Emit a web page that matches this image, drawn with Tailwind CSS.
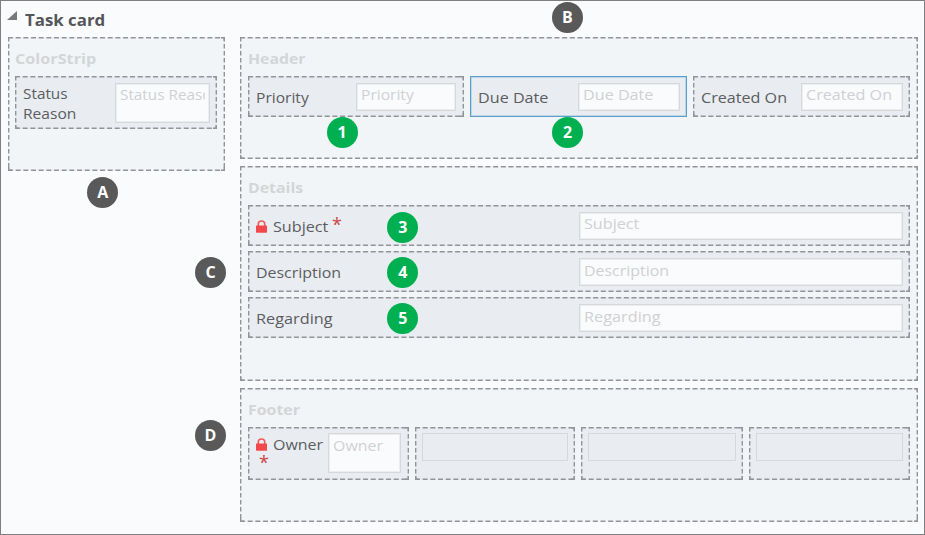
<!DOCTYPE html>
<html lang="en">
<head>
<meta charset="utf-8">
<title>Task card</title>
<script src="https://cdn.jsdelivr.net/npm/@tailwindcss/browser@4"></script>
</head>
<body class="bg-[#fafbfd]">
<main class="relative w-[925px] h-[535px] overflow-hidden border border-[#7f7f7f] bg-[#fafbfd] font-['Open_Sans','Noto_Sans',sans-serif] text-[15px] leading-5 text-[#5b5d60]">
  <header class="flex h-9 pl-[6px]">
    <svg class="mt-[10px] w-[10px] h-[9px]" viewBox="0 0 10 9"><path d="M10 0V9H0Z" fill="#77787a"/></svg>
    <h1 class="ml-[8px] mt-[9px] text-[16px] font-bold text-[#55565a]"><span data-w="80">Task card</span></h1>
  </header>

  <div class="flex pl-[7px] gap-[15px]">
    <section data-dashed class="relative w-[217px] h-[134px] bg-[#f1f5f8] pl-[7px] pt-[11px]">
      <h2 class="h-7 font-bold text-[#d3d5d7]"><span data-w="81">ColorStrip</span></h2>
      <div data-dashed class="relative flex w-[202px] h-[53px] bg-[#e9ecf1] pl-2 pt-[7px]">
        <div class="w-[92px]"><div><span data-w="45">Status</span></div><div><span data-w="53">Reason</span></div></div>
        <div class="w-[95px] h-10 overflow-hidden whitespace-nowrap border border-[#d6d8da] inset-shadow-[0_0_0_1px_#ebedef] bg-[#fafbfd] px-1 font-medium text-[#cfd1d3]"><div class="overflow-hidden"><span data-w="101">Status Reason</span></div></div>
      </div>
    </section>

    <div class="flex flex-col gap-[7px]">
      <section data-dashed class="relative w-[678px] h-[122px] bg-[#f1f5f8] pl-2 pt-[11px]">
        <h2 class="h-7 font-bold text-[#d3d5d7]"><span data-w="58">Header</span></h2>
        <div class="flex gap-[6px]">
          <div data-dashed class="relative flex w-[216px] h-[41px] bg-[#e9ecf1] pl-2 pt-[7px]">
            <div class="w-[100px] pt-1"><span data-w="53">Priority</span></div>
            <div class="w-[100px] h-7 border border-[#d6d8da] inset-shadow-[0_0_0_1px_#ebedef] bg-[#fafbfd] pl-1 font-medium text-[#cfd1d3]"><span data-w="53">Priority</span></div>
          </div>
          <div class="flex w-[217px] h-[41px] border border-[#58a0cb] inset-shadow-[0_0_0_1px_#bcd6e6] bg-[#e9ecf1] pl-[7px] pt-[6px]">
            <div class="w-[100px] pt-1"><span data-w="70">Due Date</span></div>
            <div class="w-[102px] h-7 border border-[#d6d8da] inset-shadow-[0_0_0_1px_#ebedef] bg-[#fafbfd] pl-1 font-medium text-[#cfd1d3]"><span data-w="70">Due Date</span></div>
          </div>
          <div data-dashed class="relative flex w-[217px] h-[41px] bg-[#e9ecf1] pl-2 pt-[7px]">
            <div class="w-[100px] pt-1"><span data-w="86">Created On</span></div>
            <div class="w-[102px] h-7 border border-[#d6d8da] inset-shadow-[0_0_0_1px_#ebedef] bg-[#fafbfd] pl-1 font-medium text-[#cfd1d3]"><span data-w="86">Created On</span></div>
          </div>
        </div>
      </section>

      <section data-dashed class="relative w-[678px] h-[215px] bg-[#f1f5f8] pl-2 pt-[11px]">
        <h2 class="h-7 font-bold text-[#d3d5d7]"><span data-w="55">Details</span></h2>
        <div class="flex flex-col gap-[5px]">
          <div data-dashed class="relative flex w-[662px] h-[41px] bg-[#e9ecf1] pl-2 pt-[7px]">
            <div class="flex w-[323px] pt-1">
              <svg class="mt-[4px] w-[11px] h-[13px]" viewBox="0 0 11 13"><path d="M2.3 6V3.8a3.2 2.8 0 0 1 6.4 0V6" fill="none" stroke="#ee5a5c" stroke-width="1.6"/><rect y="5.5" width="11" height="7.2" rx=".6" fill="#f1494b"/></svg>
              <div class="ml-[6px] w-[59px]"><span data-w="55">Subject</span></div>
              <span class="-mt-[2px] text-[18px] text-[#cc4447]">*</span>
            </div>
            <div class="w-[324px] h-[28px] border border-[#d6d8da] inset-shadow-[0_0_0_1px_#ebedef] bg-[#fafbfd] pl-1 font-medium text-[#cfd1d3]"><span data-w="55">Subject</span></div>
          </div>
          <div data-dashed class="relative flex w-[662px] h-[41px] bg-[#e9ecf1] pl-2 pt-[7px]">
            <div class="w-[323px] pt-1"><span data-w="85">Description</span></div>
            <div class="w-[324px] h-[28px] border border-[#d6d8da] inset-shadow-[0_0_0_1px_#ebedef] bg-[#fafbfd] pl-1 pt-px font-medium text-[#cfd1d3]"><span data-w="85">Description</span></div>
          </div>
          <div data-dashed class="relative flex w-[662px] h-[41px] bg-[#e9ecf1] pl-2 pt-[7px]">
            <div class="w-[323px] pt-1"><span data-w="77">Regarding</span></div>
            <div class="w-[324px] h-[28px] border border-[#d6d8da] inset-shadow-[0_0_0_1px_#ebedef] bg-[#fafbfd] pl-1 pt-px font-medium text-[#cfd1d3]"><span data-w="77">Regarding</span></div>
          </div>
        </div>
      </section>

      <section data-dashed class="relative w-[678px] h-[134px] bg-[#f1f5f8] pl-2 pt-[11px]">
        <h2 class="h-7 font-bold text-[#d3d5d7]"><span data-w="52">Footer</span></h2>
        <div class="flex gap-[6px]">
          <div data-dashed class="relative flex w-[161px] h-[53px] bg-[#e9ecf1] pl-2 pt-[6px]">
            <div class="w-[72px] pt-px">
              <div class="flex h-5">
                <svg class="mt-[4px] w-[11px] h-[13px]" viewBox="0 0 11 13"><path d="M2.3 6V3.8a3.2 2.8 0 0 1 6.4 0V6" fill="none" stroke="#ee5a5c" stroke-width="1.6"/><rect y="5.5" width="11" height="7.2" rx=".6" fill="#f1494b"/></svg>
                <div class="ml-[6px]"><span data-w="50">Owner</span></div>
              </div>
              <div class="-mt-[2px] pl-[3px] text-[18px] text-[#cc4447]">*</div>
            </div>
            <div class="w-[73px] h-10 border border-[#d6d8da] inset-shadow-[0_0_0_1px_#ebedef] bg-[#fafbfd] pl-1 pt-px font-medium text-[#cfd1d3]"><span data-w="50">Owner</span></div>
          </div>
          <div data-dashed class="relative w-[160px] h-[53px] bg-[#e9ecf1] pl-[7px] pt-[6px]"><div class="w-[146px] h-7 border border-[#d6d8da]"></div></div>
          <div data-dashed class="relative w-[162px] h-[53px] bg-[#e9ecf1] pl-[7px] pt-[6px]"><div class="w-[148px] h-7 border border-[#d6d8da]"></div></div>
          <div data-dashed class="relative w-[161px] h-[53px] bg-[#e9ecf1] pl-[7px] pt-[6px]"><div class="w-[147px] h-7 border border-[#d6d8da]"></div></div>
        </div>
      </section>
    </div>
  </div>

  <div class="absolute inset-0 text-center text-[16px] font-bold leading-[30px] text-white">
    <div class="absolute left-[86.4px] top-[176.4px] size-[31px] rounded-full bg-[#595959]">A</div>
    <div class="absolute left-[551px] top-[1px] size-[30.5px] rounded-full bg-[#595959]">B</div>
    <div class="absolute left-[194px] top-[256.4px] size-[31px] rounded-full bg-[#595959]">C</div>
    <div class="absolute left-[194px] top-[419px] size-[31px] rounded-full bg-[#595959]">D</div>
    <div class="absolute left-[325.5px] top-[116.4px] size-[31px] rounded-full bg-[#00b050]">1</div>
    <div class="absolute left-[551px] top-[116.4px] size-[31px] rounded-full bg-[#00b050]">2</div>
    <div class="absolute left-[386.4px] top-[211px] size-[31px] rounded-full bg-[#00b050]">3</div>
    <div class="absolute left-[386.4px] top-[256.4px] size-[31px] rounded-full bg-[#00b050]">4</div>
    <div class="absolute left-[386.4px] top-[302.3px] size-[31px] rounded-full bg-[#00b050]">5</div>
  </div>
</main>
<script>
  // Dashed outlines with a fixed dash rhythm on every side
  document.querySelectorAll('[data-dashed]').forEach(el => {
    el.insertAdjacentHTML('beforeend', `<svg class="pointer-events-none absolute inset-0 size-full" fill="none" stroke="#929497" stroke-width="1.4">
      <g stroke-dasharray="5 2.67"><line x1="0" y1=".7" x2="100%" y2=".7"/><line x1="0" y1="100%" x2="100%" y2="100%" transform="translate(0 -.7)"/></g>
      <g stroke-dasharray="4.6 2.4"><line x1=".7" y1="0" x2=".7" y2="100%"/><line x1="100%" y1="0" x2="100%" y2="100%" transform="translate(-.7 0)"/></g>
      <svg x="100%" overflow="visible"><path d="M-4 .7H-.7V4"/></svg>
      <svg y="100%" overflow="visible"><path d="M4 -.7H.7V-4"/></svg>
      <svg x="100%" y="100%" overflow="visible"><path d="M-4 -.7H-.7V-4"/></svg>
    </svg>`);
  });
  // Stretch each caption to its set width
  window.addEventListener('load', () => document.querySelectorAll('[data-w]').forEach(el => {
    el.style.display = 'inline-block';
    el.style.whiteSpace = 'nowrap';
    el.style.transformOrigin = '0 0';
    el.style.transform = 'scaleX(' + el.dataset.w / el.offsetWidth + ')';
  }));
</script>
</body>
</html>
